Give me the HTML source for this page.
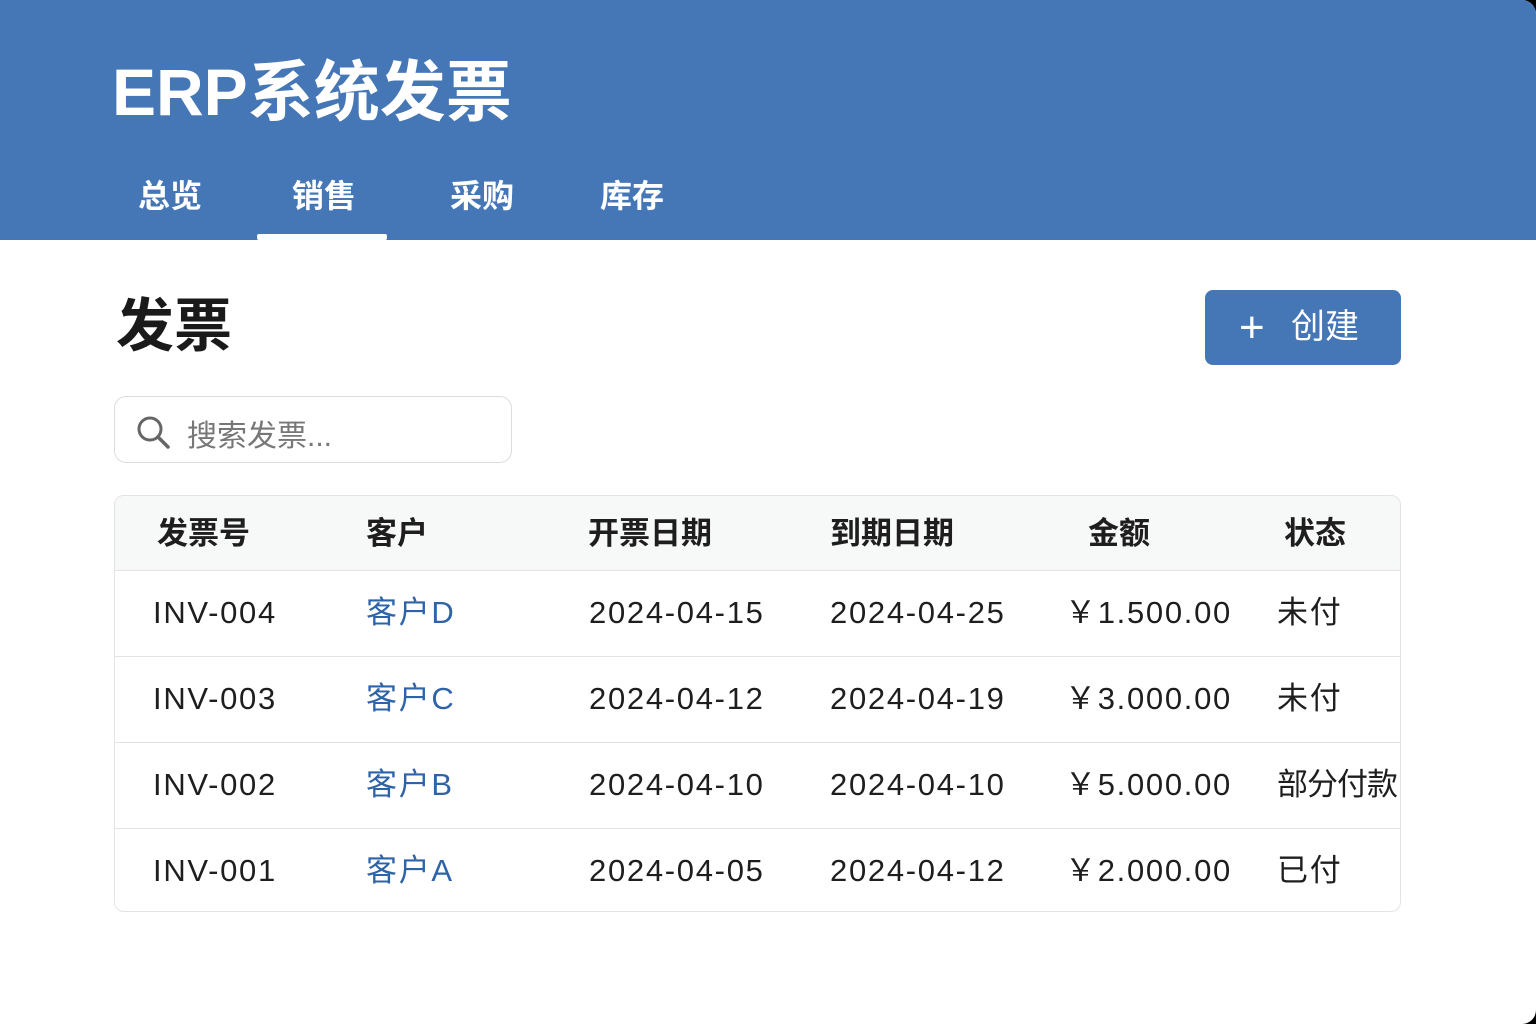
<!DOCTYPE html><html><head><meta charset="utf-8"><style>
html,body{margin:0;background:#000;}
body{width:1536px;height:1024px;overflow:hidden;font-family:"Liberation Sans","Noto Sans CJK SC",sans-serif;}
.page{position:absolute;left:0;top:0;width:1536px;height:1024px;background:#fff;border-radius:0 14px 14px 0;overflow:hidden;}
.hdr{position:absolute;left:0;top:0;width:1536px;height:240px;background:#4577b7;}
.title{position:absolute;left:112px;top:52px;font-size:66px;font-weight:bold;color:#fff;line-height:80px;}
.tab{position:absolute;top:176px;font-size:32px;font-weight:bold;color:#fff;line-height:40px;}
.ul{position:absolute;left:257px;top:234px;width:130px;height:6px;background:#fff;border-radius:2px;}
h1{position:absolute;left:116px;top:292px;margin:0;font-size:58px;line-height:70px;color:#1a1a1a;}
.btn{position:absolute;left:1205px;top:290px;width:196px;height:75px;background:#4577b7;border-radius:8px;color:#fff;font-size:34px;line-height:75px;}
.search{position:absolute;left:114px;top:396px;width:398px;height:67px;border:1.5px solid #ddd;border-radius:12px;box-sizing:border-box;}
.search span{position:absolute;left:72px;top:14px;font-size:30px;color:#777;}
.tbl{position:absolute;left:114px;top:495px;width:1287px;height:417px;border:1.5px solid #e3e3e3;border-radius:10px;box-sizing:border-box;overflow:hidden;}
.th{position:absolute;left:0;top:0;width:100%;height:74px;background:#f7f8f8;border-bottom:1px solid #e3e3e3;}
.row{position:absolute;left:0;width:100%;height:86px;border-bottom:1px solid #e3e3e3;}
.c{position:absolute;font-size:31px;color:#1e1e1e;line-height:40px;white-space:nowrap;}
.th .c{top:18px;font-weight:bold;}
.row .c{top:23px;letter-spacing:1.7px;}
.b{color:#2f63a7;}
</style></head><body><div class="page">
<div class="hdr">
<div class="title">ERP系统发票</div>
<div class="tab" style="left:138px">总览</div>
<div class="tab" style="left:292px">销售</div>
<div class="tab" style="left:450px">采购</div>
<div class="tab" style="left:600px">库存</div>
<div class="ul"></div>
</div>
<h1>发票</h1>
<div class="btn"><span style="position:absolute;left:34px;font-size:44px;font-weight:300">+</span><span style="position:absolute;left:86px">创建</span></div>
<div class="search"><svg style="position:absolute;left:20px;top:17px" width="36" height="36" viewBox="0 0 36 36"><circle cx="15" cy="15" r="11" fill="none" stroke="#666" stroke-width="3"/><path d="M23 23L33 33" stroke="#666" stroke-width="3.5" stroke-linecap="round"/></svg><span>搜索发票...</span></div>
<div class="tbl">
<div class="th"><div class="c" style="left:42px">发票号</div><div class="c" style="left:251px">客户</div><div class="c" style="left:473px">开票日期</div><div class="c" style="left:715px">到期日期</div><div class="c" style="left:973px">金额</div><div class="c" style="left:1169px">状态</div></div>
<div class="row" style="top:74px"><div class="c" style="left:38px">INV-004</div><div class="c b" style="left:251px">客户D</div><div class="c" style="left:474px">2024-04-15</div><div class="c" style="left:715px">2024-04-25</div><div class="c" style="left:950px">￥1.500.00</div><div class="c" style="left:1162px">未付</div></div>
<div class="row" style="top:160px"><div class="c" style="left:38px">INV-003</div><div class="c b" style="left:251px">客户C</div><div class="c" style="left:474px">2024-04-12</div><div class="c" style="left:715px">2024-04-19</div><div class="c" style="left:950px">￥3.000.00</div><div class="c" style="left:1162px">未付</div></div>
<div class="row" style="top:246px"><div class="c" style="left:38px">INV-002</div><div class="c b" style="left:251px">客户B</div><div class="c" style="left:474px">2024-04-10</div><div class="c" style="left:715px">2024-04-10</div><div class="c" style="left:950px">￥5.000.00</div><div class="c" style="left:1162px;letter-spacing:-1px">部分付款</div></div>
<div class="row" style="top:332px;border-bottom:none"><div class="c" style="left:38px">INV-001</div><div class="c b" style="left:251px">客户A</div><div class="c" style="left:474px">2024-04-05</div><div class="c" style="left:715px">2024-04-12</div><div class="c" style="left:950px">￥2.000.00</div><div class="c" style="left:1162px">已付</div></div>
</div>
</div></body></html>
